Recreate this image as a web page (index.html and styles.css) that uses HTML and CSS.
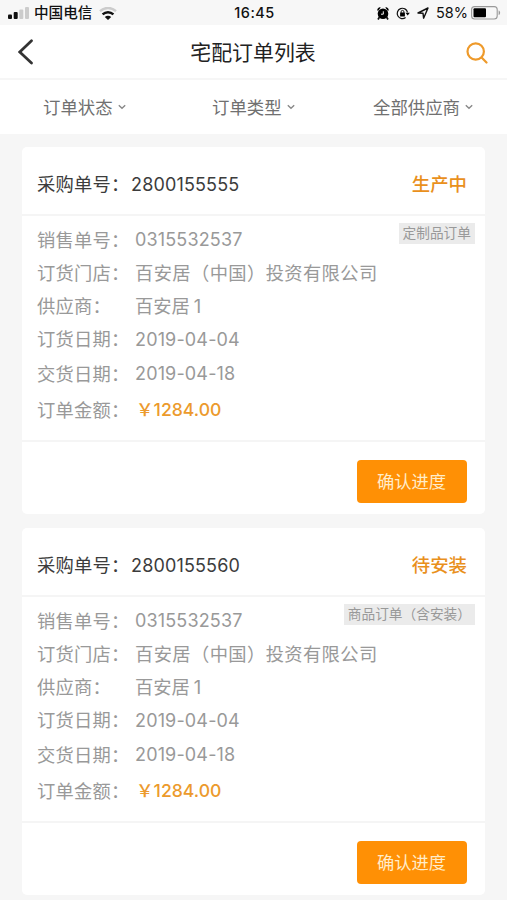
FILE: index.html
```html
<!DOCTYPE html>
<html lang="zh-CN">
<head>
<meta charset="utf-8">
<title>宅配订单列表</title>
<link rel="stylesheet" href="styles.css">
</head>
<body>
<div class="statusbar">
  <div class="status-left">
    <svg class="signal" width="21" height="12" viewBox="0 0 21 12"><rect x="0" y="7.5" width="4" height="4.5" rx="1"/><rect x="5.7" y="5" width="4" height="7" rx="1"/><rect class="dim" x="11.3" y="2.5" width="4" height="9.5" rx="1"/><rect class="dim" x="17" y="0" width="4" height="12" rx="1"/></svg>
    <span class="carrier">中国电信</span>
    <svg class="wifi" width="18" height="13" viewBox="0 0 18 13" fill="none" stroke-width="2.4"><path class="wifi-dim" d="M1 4.2C5.6-.1 12.4-.1 17 4.2"/><path d="M3.6 7.4c3.100-2.900 7.700-2.900 10.800 0"/><path class="wifi-dot" d="M5.800 10c1.900-1.700 4.500-1.700 6.400 0L9 13z"/></svg>
  </div>
  <span class="clock">16:45</span>
  <div class="status-right">
    <svg width="12" height="13" viewBox="0 0 12 13"><path d="M.3 3.2A2.5 2.5 0 0 1 3.8.6L1 3.9zM11.700 3.200A2.500 2.500 0 0 0 8.200.6L11 3.900z"/><circle cx="6" cy="6.700" r="5.300"/><path d="M2.500 10 1 12.500M9.500 10l1.500 2.500" stroke="#111" stroke-width="1.700"/><path d="M6.300 4.300v2.900H4" fill="none" stroke="#f7f7f7" stroke-width="1"/></svg>
    <svg width="14" height="13" viewBox="0 0 14 13"><path d="M11.500 5.300A5.200 5.200 0 1 0 9.600 10.600" fill="none" stroke="#111" stroke-width="1.200"/><path d="M9.500 5.700h4.300L11.700 8.500z"/><rect x="4.100" y="5.600" width="4.800" height="3.800" rx=".5"/><path d="M5.100 6V4.800a1.400 1.400 0 0 1 2.800 0V6" fill="none" stroke="#111"/></svg>
    <svg width="12" height="12" viewBox="0 0 12 12"><path d="M1 6 11 1 6.600 11.200 6 6.200z" fill="none" stroke="#111" stroke-width="1.400" stroke-linejoin="round"/></svg>
    <span class="percent">58%</span>
    <svg class="battery" width="30" height="14" viewBox="0 0 30 14"><rect x=".6" y=".6" width="25.600" height="12.400" rx="3" fill="none" stroke="#999" stroke-width="1.100"/><rect x="2.500" y="2.300" width="12.500" height="9" rx="1"/><path d="M27.600 4.500c2 .6 2 4 0 4.600z" fill="#999"/></svg>
  </div>
</div>
<header class="navbar">
  <svg class="back" width="16" height="27" viewBox="0 0 16 27"><path d="M13.500 2.700 1.800 14 13.500 25" fill="none" stroke="#333" stroke-width="2.700" stroke-linecap="round"/></svg>
  <h1>宅配订单列表</h1>
  <svg class="search" width="22" height="22" viewBox="0 0 22 22"><circle cx="9.700" cy="9.500" r="8.200"/><path d="m15.600 15.500 4.900 5"/></svg>
</header>
<nav class="filters">
  <div class="filter">订单状态<svg class="chevron" width="8" height="6" viewBox="0 0 8 6"><path d="m.8 1.200 3.200 3 3.200-3"/></svg></div>
  <div class="filter middle">订单类型<svg class="chevron" width="8" height="6" viewBox="0 0 8 6"><path d="m.8 1.200 3.200 3 3.200-3"/></svg></div>
  <div class="filter">全部供应商<svg class="chevron" width="8" height="6" viewBox="0 0 8 6"><path d="m.8 1.200 3.200 3 3.200-3"/></svg></div>
</nav>
<main class="orders">
  <article class="card">
    <div class="card-head"><span class="head-label">采购单号：</span><span class="order-no">2800155555</span><span class="state">生产中</span></div>
    <div class="card-body">
      <dl class="details">
        <dt>销售单号：</dt><dd class="digits">0315532537</dd>
        <dt>订货门店：</dt><dd class="company">百安居（中国）投资有限公司</dd>
        <dt>供应商：</dt><dd>百安居<span class="unit">1</span></dd>
        <dt>订货日期：</dt><dd class="digits">2019-04-04</dd>
        <dt>交货日期：</dt><dd class="digits">2019-04-18</dd>
        <dt>订单金额：</dt><dd class="price">￥1284.00</dd>
      </dl>
      <span class="tag">定制品订单</span>
    </div>
    <div class="card-foot"><button class="confirm">确认进度</button></div>
  </article>
  <article class="card">
    <div class="card-head"><span class="head-label">采购单号：</span><span class="order-no">2800155560</span><span class="state">待安装</span></div>
    <div class="card-body">
      <dl class="details">
        <dt>销售单号：</dt><dd class="digits">0315532537</dd>
        <dt>订货门店：</dt><dd class="company">百安居（中国）投资有限公司</dd>
        <dt>供应商：</dt><dd>百安居<span class="unit">1</span></dd>
        <dt>订货日期：</dt><dd class="digits">2019-04-04</dd>
        <dt>交货日期：</dt><dd class="digits">2019-04-18</dd>
        <dt>订单金额：</dt><dd class="price">￥1284.00</dd>
      </dl>
      <span class="tag">商品订单（含安装）</span>
    </div>
    <div class="card-foot"><button class="confirm">确认进度</button></div>
  </article>
</main>
</body>
</html>
```
FILE: styles.css
```css
* {
  box-sizing: border-box;
}

body {
  margin: 0;
  height: 900px;
  overflow: hidden;
  background: #f6f6f6;
  color: #3c3c3c;
  font-family: Inter, "Noto Sans CJK SC", sans-serif;
  font-size: 18px;
  white-space: nowrap;
}

svg {
  display: block;
  flex: none;
}

.statusbar {
  display: grid;
  grid-template-columns: 1fr auto 1fr;
  align-items: center;
  height: 25px;
  padding: 1px 6px 0 8px;
  background: #f7f7f7;
  color: #111;
  font-size: 14.5px;
  line-height: 20px;
}

.status-left,
.status-right {
  display: flex;
  align-items: center;
}

.status-right {
  justify-content: flex-end;
  gap: 7px;
}

.signal {
  margin-right: 5px;
  fill: #111;
}

.signal .dim {
  fill: #ccc;
}

.carrier {
  font-size: 14.6px;
  font-weight: 500;
}

.wifi {
  margin-left: 7px;
  stroke: #111;
}

.wifi-dim {
  stroke: #ccc;
}

.wifi-dot {
  fill: #111;
  stroke: none;
}

.clock {
  font-weight: 500;
  letter-spacing: 0.5px;
}

.percent {
  margin-right: -4px;
  font-size: 14.5px;
}

.navbar {
  display: grid;
  grid-template-columns: 60px 1fr 60px;
  align-items: center;
  height: 55px;
  padding: 0 19px 0 18px;
  border-bottom: 2px solid #f6f6f6;
  background: #fff;
}

.navbar h1 {
  margin: 0;
  padding-top: 2px;
  font-size: 20.9px;
  font-weight: 400;
  line-height: 30px;
  text-align: center;
  color: #222;
}

.search {
  justify-self: end;
  margin-top: 2px;
  fill: none;
  stroke: #ee9a2b;
  stroke-width: 2.2;
  stroke-linecap: round;
}

.filters {
  display: flex;
  justify-content: space-between;
  align-items: center;
  height: 54px;
  padding: 0 34px 2px 43px;
  background: #fff;
  color: #707070;
  font-size: 17.4px;
}

.filter {
  display: flex;
  align-items: center;
  gap: 5px;
}

.filter.middle {
  margin-left: 8px;
}

.chevron {
  margin-top: 1px;
  fill: none;
  stroke: #888;
  stroke-width: 1.4;
}

.orders {
  display: grid;
  gap: 14px;
  padding: 13px 22px 0;
}

.card {
  border-radius: 5px;
  background: #fff;
}

.card-head {
  display: flex;
  align-items: center;
  height: 69px;
  padding: 6px 18px 0 15px;
  border-bottom: 2px solid #f5f5f5;
}

.head-label {
  width: 94px;
  padding-bottom: 1px;
  font-size: 18.3px;
  letter-spacing: 0.2px;
}

.order-no {
  padding-top: 1px;
  font-size: 18px;
  letter-spacing: 0.15px;
}

.state {
  margin-left: auto;
  padding-bottom: 1px;
  color: #e9901c;
  font-size: 18.4px;
  font-weight: 500;
}

.card-body {
  position: relative;
  height: 226px;
  padding: 7px 10px 0 15px;
  border-bottom: 2px solid #f5f5f5;
}

.details {
  display: grid;
  grid-template-columns: 98px auto;
  grid-template-rows: 33px 33px 33px 34px 35px 37px;
  align-items: center;
  margin: 0;
  color: #999;
  font-size: 18.3px;
  line-height: 28px;
}

.details dt {
  letter-spacing: 0.2px;
}

.details dd {
  margin: 0;
}

.details .digits {
  padding-top: 1px;
  font-size: 18px;
  letter-spacing: 0.15px;
}

.details .company {
  letter-spacing: 0.38px;
}

.unit {
  margin-left: 4px;
}

.details .price {
  padding-left: 1px;
  color: #ec9a2c;
  font-size: 17.6px;
  font-weight: 500;
}

.tag {
  position: absolute;
  top: 7px;
  right: 10px;
  height: 21px;
  padding: 0 4px;
  background: #ebebeb;
  color: #999;
  font-size: 13.7px;
  line-height: 21px;
}

.card-foot {
  display: flex;
  justify-content: flex-end;
  align-items: center;
  height: 72px;
  padding: 6px 18px 0 0;
}

.confirm {
  width: 110px;
  height: 43px;
  padding: 0 1px 1px 0;
  border: 0;
  border-radius: 4px;
  background: #ff9005;
  color: #ffecc9;
  font-family: inherit;
  font-size: 17.3px;
}
```
